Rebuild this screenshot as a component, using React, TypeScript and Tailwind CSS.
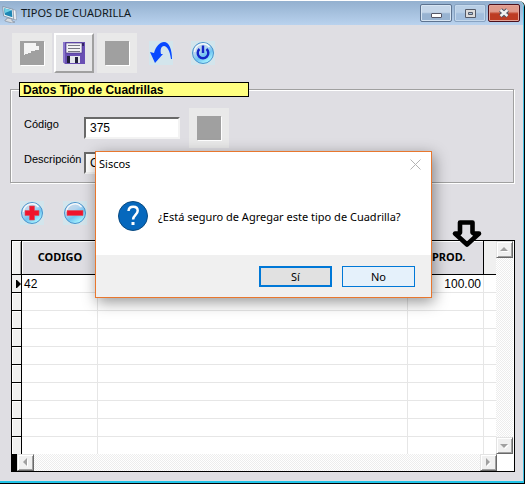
import type { ReactNode } from "react";

const EMPTY_ROWS = [1, 2, 3, 4, 5, 6, 7, 8, 9];

function ToolButton({ label, raised, children }: { label: string; raised?: boolean; children: ReactNode }) {
  return (
    <button
      type="button"
      aria-label={label}
      className={
        raised
          ? "flex h-10 w-10 items-center justify-center border-2 border-t-white border-l-white border-r-[#a0a0a0] border-b-[#a0a0a0] bg-[#e6e6e8]"
          : "flex h-10 w-10 items-center justify-center bg-[#e9e9e9]"
      }
    >
      {children}
    </button>
  );
}

function GraySquare() {
  return <span className="block h-6 w-6 bg-[#a0a0a0] shadow-[1px_1px_0_white]" />;
}

function Orb({ id, children }: { id: string; children: ReactNode }) {
  return (
    <svg viewBox="0 0 24 24" className="h-6 w-6" aria-hidden="true">
      <defs>
        <linearGradient id={id} x1="0" y1="0" x2="0.6" y2="1">
          <stop offset="0" stopColor="#d4dce6" />
          <stop offset="0.45" stopColor="#b4d4ee" />
          <stop offset="0.7" stopColor="#6fc4f2" />
          <stop offset="1" stopColor="#a8f4ff" />
        </linearGradient>
      </defs>
      <rect width="24" height="24" fill="#d3e5ec" />
      <circle cx="12" cy="12" r="10.5" fill={`url(#${id})`} stroke="#4a93cc" strokeWidth="1" />
      <path d="M3.5 11a8.5 8.5 0 0 1 15-5" fill="none" stroke="#fff" strokeWidth="1.5" opacity="0.8" />
      {children}
    </svg>
  );
}

function ScrollButton({ label, points }: { label: string; points: string }) {
  return (
    <button
      type="button"
      aria-label={label}
      className="flex h-[17px] w-[17px] shrink-0 items-center justify-center border border-t-[#e3e3e3] border-l-[#e3e3e3] border-r-[#696969] border-b-[#696969] bg-[#f0f0f0] shadow-[inset_1px_1px_0_white,inset_-1px_-1px_0_#a0a0a0]"
    >
      <svg viewBox="0 0 9 9" className="h-[9px] w-[9px]" aria-hidden="true">
        <polygon points={points} fill="#fff" transform="translate(1 1)" />
        <polygon points={points} fill="#a0a0a0" />
      </svg>
    </button>
  );
}

const TRACK = "bg-[repeating-conic-gradient(#ededed_0_25%,#ffffff_0_50%)] bg-[length:2px_2px]";
const FIELD =
  "h-[22px] border-2 border-t-[#696969] border-l-[#696969] border-r-[#f3f3f3] border-b-[#f3f3f3] bg-white px-1 font-['Liberation_Sans',Arial,sans-serif] text-xs text-black outline-none";

function TitleBar() {
  return (
    <header className="flex h-6 items-start bg-linear-to-b from-[#93b0cf] to-[#b9d2ee] pr-[3px]">
      <svg viewBox="0 0 16 18" className="mt-1 ml-0.5 h-[18px] w-4" aria-hidden="true">
        <path d="M5 13l5 1v2l3 1-3 1-7-2v-1l2-1z" fill="#d9dde2" stroke="#7d8a98" strokeWidth=".6" />
        <path d="M0.7 1.5L11 4.3l.8 10L1.6 11z" fill="#eef4f8" stroke="#798ca0" strokeWidth=".8" />
        <path d="M2 3.2l7.8 2.1.6 7L2.8 9.8z" fill="#1c86b4" />
        <path d="M2 3.2l7.8 2.1L3 8z" fill="#6fd0e4" />
        <path d="M11.2 4.3l2.6 1.2.6 9.5-2.5-.7z" fill="#f4f6f8" stroke="#8594a4" strokeWidth=".6" />
      </svg>
      <h1 className="ml-[3px] flex-1 font-['Noto_Sans',sans-serif] text-[11px] leading-6 text-[#101820]">TIPOS DE CUADRILLA</h1>
      <div className="mt-[3px] flex gap-0.5">
        <button type="button" aria-label="Minimizar" className="flex h-[18px] w-8 items-center justify-center rounded-xs border border-[#5d7390] bg-linear-to-b from-[#c5d6e9] from-45% to-[#98b3d1] to-55% shadow-[inset_0_0_0_1px_#d7e5f3]">
          <svg viewBox="0 0 11 5" className="mt-1 h-[5px] w-[11px]" aria-hidden="true">
            <rect x=".5" y=".5" width="10" height="4" rx=".5" fill="#fff" stroke="#545666" />
          </svg>
        </button>
        <button type="button" aria-label="Maximizar" className="flex h-[18px] w-8 items-center justify-center rounded-xs border border-[#88a3c2] bg-linear-to-b from-[#b9cfe6] from-45% to-[#a3bfde] to-55% shadow-[inset_0_0_0_1px_#c4d8ec]">
          <svg viewBox="0 0 11 9" className="h-[9px] w-[11px]" aria-hidden="true">
            <path d="M.5 .5h10v8h-10zM3.5 3.5h4v2h-4z" fill="#dcdcdc" fillRule="evenodd" stroke="#545a68" />
          </svg>
        </button>
        <button type="button" aria-label="Cerrar" className="flex h-[18px] w-8 items-center justify-center rounded-xs border border-[#4c101c] bg-linear-to-b from-[#e09a8b] from-40% to-[#bd3c23] to-55% shadow-[inset_0_0_0_1px_#e4a498]">
          <svg viewBox="0 0 12 10" className="h-[10px] w-3" aria-hidden="true">
            <path d="M2.5 2l7 6M9.5 2l-7 6" stroke="#4e5565" strokeWidth="4.4" />
            <path d="M2.5 2l7 6M9.5 2l-7 6" stroke="#f2f2f2" strokeWidth="2.4" />
          </svg>
        </button>
      </div>
    </header>
  );
}

function Toolbar() {
  return (
    <nav className="flex items-center pt-2 pl-3">
      <ToolButton label="Abrir">
        <svg viewBox="0 0 25 25" className="h-[25px] w-[25px]" aria-hidden="true">
          <path d="M1 1h24v24H1z" fill="#fff" />
          <path d="M0 0h24v24H0z" fill="#a0a0a0" />
          <path d="M4 2h12v3h3v4h-4v1h-4v2H8v1H5v1H4z" fill="#f4f4f4" />
        </svg>
      </ToolButton>
      <div className="mr-[3px] ml-0.5">
        <ToolButton label="Guardar" raised>
          <svg viewBox="0 0 22 22" className="h-[22px] w-[22px]" aria-hidden="true">
            <path d="M0 0h22v22H2l-2-2z" fill="#6a50b4" />
            <path d="M0 0h2v21l-2-1z" fill="#8b78cc" />
            <path d="M3 1h16v10H3z" fill="#f2f2f4" stroke="#3c2c80" strokeWidth=".6" />
            <path d="M5 3.5h12M5 6.500h12M5 9.500h12" stroke="#777783" />
            <path d="M4 14h13v7H4z" fill="#20203a" />
            <path d="M7 14h10v7H7z" fill="#e4e6ec" />
            <path d="M12 15h3v6h-3z" fill="#22223c" />
            <path d="M19 1h2v3h-2z" fill="#342466" />
          </svg>
        </ToolButton>
      </div>
      <ToolButton label="Editar">
        <GraySquare />
      </ToolButton>
      <button type="button" aria-label="Deshacer" className="ml-3">
        <svg viewBox="0 0 24 24" className="h-6 w-6" aria-hidden="true">
          <path d="M0 0h24v24H0z" fill="#d3e5ec" />
          <path d="M1 11l4 1C7 5 11 1 15 1c5 0 8 7 8 17h-1C21 10 18 5 15 5c-3 0-4 4-3 8l2 0-8 9z" fill="#0848ff" />
        </svg>
      </button>
      <button type="button" aria-label="Salir" className="ml-[18px]">
        <Orb id="orbPower">
          <path d="M8.5 8a5.3 5.3 0 1 0 7 0M12 4.5V12" fill="none" stroke="#1426c8" strokeWidth="2.4" />
        </Orb>
      </button>
    </nav>
  );
}

function CrewForm() {
  return (
    <fieldset className="relative mt-4 mr-[9px] ml-[10px] border border-[#a0a0a0] pl-[13px] shadow-[1px_1px_0_white,inset_1px_1px_0_white]">
      <legend className="absolute -top-2 left-2 h-[15px] w-[230px] border border-black bg-[#ffff80] pl-[3px] font-['Liberation_Sans',Arial,sans-serif] text-xs leading-[14px] font-bold text-black">
        Datos Tipo de Cuadrillas
      </legend>
      <div className="flex pt-[18px]">
        <label htmlFor="codigo" className="mt-[9px] w-[60px] text-[11px] leading-[14px]">Código</label>
        <input id="codigo" defaultValue="375" className={`${FIELD} mt-[9px] mr-[9px] w-24`} />
        <ToolButton label="Buscar">
          <GraySquare />
        </ToolButton>
      </div>
      <div className="mt-1 mb-2 flex h-[22px]">
        <label htmlFor="descripcion" className="w-[60px] text-[11px] leading-[14px]">Descripción</label>
        <input id="descripcion" defaultValue="C" className={`${FIELD} w-[300px]`} />
      </div>
    </fieldset>
  );
}

function CrewGrid() {
  return (
    <div className="relative mr-2 mb-[9px] ml-[11px] border border-black bg-white">
      <div className="flex pr-px">
        <table className="w-full flex-1 table-fixed border-separate border-spacing-0 font-['Liberation_Sans',Arial,sans-serif] text-xs text-black">
          <colgroup>
            <col className="w-[10px]" />
            <col className="w-[76px]" />
            <col />
            <col className="w-[76px]" />
            <col className="w-[12px]" />
          </colgroup>
          <thead>
            <tr className="h-[34px] bg-[#dfdee3] font-['Noto_Sans',sans-serif] text-[11px]">
              <th className="border-r border-b border-black bg-[#f0f0f0] p-0 shadow-[inset_1px_1px_0_white,inset_-1px_0_0_#a0a0a0]" />
              <th className="border-b border-black p-0 shadow-[inset_1px_1px_0_white]">CODIGO</th>
              <th className="border-b border-black p-0" />
              <th className="border-r border-b border-black p-0 pl-6 text-left shadow-[inset_0_1px_0_white]">PROD.</th>
              <th className="border-b border-black bg-[#f0f0f0] p-0" />
            </tr>
          </thead>
          <tbody>
            <tr className="h-[18px] leading-4">
              <td className="border-r border-b border-black bg-[#f0f0f0] p-0">
                <svg viewBox="0 0 5 8" className="ml-1 h-2 w-[5px]" aria-hidden="true">
                  <path d="M0 0h1l4 4-4 4H0z" />
                </svg>
              </td>
              <td className="border-r border-b border-[#e6e6e6] p-0 pl-0.5">42</td>
              <td className="border-r border-b border-[#e6e6e6] p-0" />
              <td className="border-r border-b border-[#e6e6e6] p-0 pr-0.5 text-right">100.00</td>
              <td className="border-b border-[#e6e6e6] p-0" />
            </tr>
            {EMPTY_ROWS.map((row) => (
              <tr key={row} className="group h-[18px] last:h-[17px]">
                <td className="border-r border-b border-black bg-[#f0f0f0] p-0 shadow-[inset_1px_1px_0_white] group-last:border-b-0" />
                <td className="border-r border-b border-[#e6e6e6] p-0 group-last:border-b-0" />
                <td className="border-r border-b border-[#e6e6e6] p-0 group-last:border-b-0" />
                <td className="border-r border-b border-[#e6e6e6] p-0 group-last:border-b-0" />
                <td className="border-b border-[#e6e6e6] p-0 group-last:border-b-0" />
              </tr>
            ))}
          </tbody>
        </table>
        <div className={`flex w-[17px] flex-col justify-between ${TRACK}`}>
          <ScrollButton label="Subir" points="0,6 4,2 8,6" />
          <ScrollButton label="Bajar" points="0,3 8,3 4,7" />
        </div>
      </div>
      <div className="flex pr-px">
        <div className="w-[5px] bg-black" />
        <div className={`flex flex-1 justify-between ${TRACK}`}>
          <ScrollButton label="Izquierda" points="6,0 6,8 2,4" />
          <ScrollButton label="Derecha" points="2,0 2,8 6,4" />
        </div>
        <div className="w-4 bg-white" />
      </div>
      <svg viewBox="0 0 32 30" className="absolute -top-[22px] right-[31px] h-[30px] w-8" aria-hidden="true">
        <path d="M9 3.500h12.500v10l1.500 1h5L16 25.500 4 14.500h4l1-1z" fill="#dfdee3" stroke="#000" strokeWidth="4.600" strokeLinejoin="round" />
      </svg>
    </div>
  );
}

function ConfirmDialog() {
  return (
    <div
      role="dialog"
      aria-labelledby="dialog-title"
      className="absolute top-[150px] left-[95px] w-[337px] border border-[#e8772e] bg-white font-['Noto_Sans',sans-serif] text-[11px] text-black shadow-[2px_4px_14px_rgba(0,0,0,0.42)]"
    >
      <div className="flex h-[49px] items-start justify-between pr-[10px] pl-[3px]">
        <h2 id="dialog-title" className="leading-6">Siscos</h2>
        <button type="button" aria-label="Cerrar mensaje" className="mt-[7px]">
          <svg viewBox="0 0 11 11" className="h-[11px] w-[11px]" aria-hidden="true">
            <path d="M.5 .5l10 10M10.500 .5l-10 10" stroke="#b4b4b4" strokeWidth="1" />
          </svg>
        </button>
      </div>
      <div className="flex h-[54px] items-start pl-[22px]">
        <svg viewBox="0 0 30 30" className="h-[30px] w-[30px]" aria-hidden="true">
          <circle cx="15" cy="15" r="14.500" fill="#0668bd" stroke="#0a4a80" />
          <path d="M10.500 10c.3-3 2.300-4.200 4.700-4.200 2.700 0 4.500 1.500 4.500 4 0 4-4.600 4.200-4.600 8.700" fill="none" stroke="#fff" strokeWidth="2.500" />
          <rect x="13.500" y="21" width="3" height="3" fill="#fff" />
        </svg>
        <p className="ml-[10px] leading-8 whitespace-nowrap">¿Está seguro de Agregar este tipo de Cuadrilla?</p>
      </div>
      <div className="flex h-[42px] items-start justify-end gap-[10px] bg-[#f0f0f0] pt-[11px] pr-4">
        <button type="button" className="h-[21px] w-[73px] border-2 border-[#0078d7] bg-[#e1e1e1] leading-[18px]">Sí</button>
        <button type="button" className="h-[21px] w-[73px] border border-[#0078d7] bg-[#e5f1fb] leading-5">No</button>
      </div>
    </div>
  );
}

export default function App() {
  return (
    <div className="bg-white pt-px pr-0.5">
      <main className="relative rounded-tr-md border-r border-b border-black font-['Liberation_Sans',Arial,sans-serif] text-black">
        <div className="overflow-hidden rounded-tr-md border-r border-b-2 border-r-[#42bfe0] border-b-[#22c4e8] bg-[#dfdee3]">
          <TitleBar />
          <Toolbar />
          <CrewForm />
          <div className="flex gap-[19px] pt-[18px] pb-[15px] pl-5">
            <button type="button" aria-label="Agregar">
              <Orb id="orbAdd">
                <path d="M9.500 5h5v4.500H19v5h-4.500V19h-5v-4.500H5v-5h4.500z" fill="#f0142c" stroke="#d8505c" strokeWidth=".6" />
              </Orb>
            </button>
            <button type="button" aria-label="Quitar">
              <Orb id="orbRemove">
                <path d="M4 9.500h16v5H4z" fill="#f0142c" stroke="#d8505c" strokeWidth=".6" />
              </Orb>
            </button>
          </div>
          <CrewGrid />
        </div>
        <ConfirmDialog />
      </main>
    </div>
  );
}
